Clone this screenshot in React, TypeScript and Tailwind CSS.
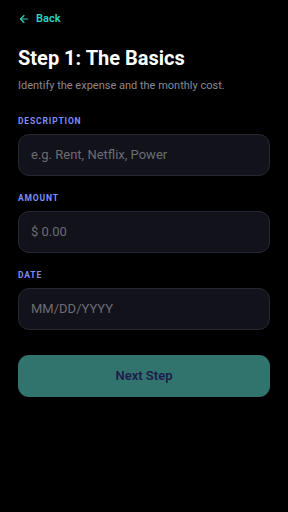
import { ArrowLeft } from 'lucide-react'

const fields = [
  { label: 'Description', placeholder: 'e.g. Rent, Netflix, Power' },
  { label: 'Amount', placeholder: '$ 0.00' },
  { label: 'Date', placeholder: 'MM/DD/YYYY' },
]

export default function App() {
  return (
    <div className="min-h-[512px] w-full bg-black px-[18px] pt-[11px] font-['Roboto',sans-serif]">
      {/* Back link */}
      <button className="flex items-center gap-[6px] text-[#2dd4bf] text-[11px] font-semibold">
        <ArrowLeft className="w-[12px] h-[12px]" strokeWidth={2.2} />
        Back
      </button>

      <h1 className="mt-[16px] text-white text-[20px] font-bold leading-[28px]">Step 1: The Basics</h1>
      <p className="mt-[7px] text-[#8a8a92] text-[11px] leading-[14px]">Identify the expense and the monthly cost.</p>

      <div className="mt-[22px] flex flex-col gap-[16px]">
        {fields.map(f => (
          <div key={f.label}>
            <label className="block text-[#818cf8] text-[8.5px] font-bold uppercase tracking-[0.1em] leading-[12px]">
              {f.label}
            </label>
            <div className="mt-[7px] h-[42px] rounded-[11px] bg-[#12121b] border border-[#272733] flex items-center px-[12px]">
              <span className="text-[#6c6c75] text-[13px]">{f.placeholder}</span>
            </div>
          </div>
        ))}
      </div>

      <button className="mt-[25px] w-full h-[42px] rounded-[11px] bg-[#31736d] text-[#1e1b4b] text-[13px] font-semibold">
        Next Step
      </button>
    </div>
  )
}
